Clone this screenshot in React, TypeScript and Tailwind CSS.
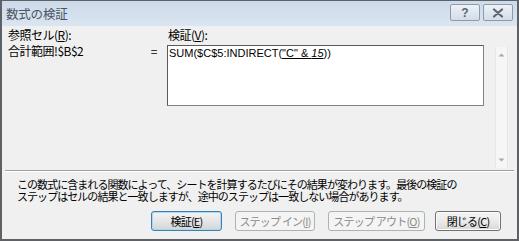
import React from "react";

const jp = { fontFamily: '"Noto Sans CJK JP", "Noto Sans", sans-serif' };
const lat = { fontFamily: '"Liberation Sans", Arial, sans-serif' };

function Btn({
  children,
  w,
  kind,
  className = "",
}: {
  children: React.ReactNode;
  w: string;
  kind: "default" | "normal" | "disabled";
  className?: string;
}) {
  const base =
    "h-[20px] flex items-center justify-center rounded-[3px] text-[11px] tracking-[-0.8px] leading-none whitespace-nowrap " +
    w +
    " " +
    className;
  if (kind === "default")
    return (
      <div
        className={
          base +
          " border border-[#3c7fb1] bg-gradient-to-b from-[#f3f3f3] via-[#e6e6e6] to-[#d4d4d4] text-black shadow-[inset_0_0_0_1px_#a8daf5]"
        }
      >
        {children}
      </div>
    );
  if (kind === "normal")
    return (
      <div
        className={
          base +
          " border border-[#707070] bg-gradient-to-b from-[#f3f3f3] via-[#ebebeb] to-[#d8d8d8] text-black shadow-[inset_0_0_0_1px_#fbfbfb]"
        }
      >
        {children}
      </div>
    );
  return (
    <div className={base + " border border-[#adb2b5] bg-[#f4f4f4] text-[#8a8a8a]"}>
      {children}
    </div>
  );
}

export default function App() {
  return (
    <div
      className="w-[519px] h-[241px] flex flex-col bg-[#f0f0f0] border-l-2 border-r-2 border-b-2 border-t border-[#5e6266] text-black overflow-hidden"
      style={jp}
    >
      {/* title bar */}
      <div className="h-[25px] shrink-0 flex items-start bg-gradient-to-b from-[#cddaea] to-[#dbe5f1]">
        <div className="pl-[4px] pt-[5px] text-[12.5px] leading-[15px] text-[#4a5462] tracking-[-0.2px]">
          数式の検証
        </div>
        <div className="ml-auto flex gap-[3px] pt-[3px] pr-[4px]">
          <div className="w-[30px] h-[17px] rounded-[2px] border border-[#8d9aaa] bg-gradient-to-b from-[#eef2f7] to-[#d3dce8] flex items-center justify-center">
            <span className="text-[12px] leading-none font-bold text-[#5b6572]" style={lat}>
              ?
            </span>
          </div>
          <div className="w-[30px] h-[17px] rounded-[2px] border border-[#8d9aaa] bg-gradient-to-b from-[#eef2f7] to-[#d3dce8] flex items-center justify-center">
            <svg width="12" height="10" viewBox="0 0 12 10">
              <path
                d="M2 1.5 L10 8.5 M10 1.5 L2 8.5"
                stroke="#5b6572"
                strokeWidth="2.2"
                strokeLinecap="round"
              />
            </svg>
          </div>
        </div>
      </div>

      {/* main */}
      <div className="h-[144px] shrink-0 flex">
        <div className="pl-[6px] pt-[1px] flex">
          <div className="w-[159px] text-[12px] tracking-[-0.5px]">
            <div className="h-[16px] leading-[16px]">
              参照セル(<span className="underline">R</span>):
            </div>
            <div className="h-[16px] leading-[16px] flex justify-between">
              <span>合計範囲!$B$2</span>
              <span className="pr-[10px]">=</span>
            </div>
          </div>
          <div className="w-[317px]">
            <div className="h-[16px] leading-[16px] text-[12px] tracking-[-0.5px] pl-[1px]">
              検証(<span className="underline">V</span>):
            </div>
            <div className="mt-[2px] h-[61px] bg-white border border-[#828282] border-t-[#5a5a5a] border-l-[#5a5a5a]">
              <div className="pl-[1px] text-[11px] leading-[15px] whitespace-nowrap" style={lat}>
                SUM($C$5:INDIRECT(
                <span className="underline">
                  "C" &amp; <span className="italic">15</span>
                </span>
                ))
              </div>
            </div>
          </div>
        </div>
        <div className="ml-[11px] mt-[21px] w-[13px] h-[121px] bg-[#f6f6f6] border-l border-r border-[#e6e6e6] flex flex-col items-center justify-between py-[6px]">
          <svg width="7" height="4" viewBox="0 0 7 4">
            <path d="M0.5 3.5 L3.5 0.5 L6.5 3.5 Z" fill="#a8a8a8" />
          </svg>
          <svg width="7" height="4" viewBox="0 0 7 4">
            <path d="M0.5 0.5 L3.5 3.5 L6.5 0.5 Z" fill="#a8a8a8" />
          </svg>
        </div>
      </div>

      {/* separator */}
      <div className="h-[2px] shrink-0 mx-[3px] border-t border-[#a0a0a0] border-b border-b-white" />

      {/* explanation */}
      <div className="pl-[15px] pt-[6px] text-[11px] tracking-[-0.95px] whitespace-nowrap">
        <div className="h-[12px] leading-[12px]">
          この数式に含まれる関数によって、シートを計算するたびにその結果が変わります。最後の検証の
        </div>
        <div className="h-[12px] leading-[12px]">
          ステップはセルの結果と一致しますが、途中のステップは一致しない場合があります。
        </div>
      </div>

      {/* buttons */}
      <div className="mt-[9px] flex">
        <Btn w="w-[71px]" kind="default" className="ml-[149px]">
          検証(<span className="underline">E</span>)
        </Btn>
        <Btn w="w-[80px]" kind="disabled" className="ml-[13px]">
          ステップ イン(<span className="underline">I</span>)
        </Btn>
        <Btn w="w-[97px]" kind="disabled" className="ml-[13px]">
          ステップ アウト(<span className="underline">O</span>)
        </Btn>
        <Btn w="w-[66px]" kind="normal" className="ml-[10px]">
          閉じる(<span className="underline">C</span>)
        </Btn>
      </div>
    </div>
  );
}
